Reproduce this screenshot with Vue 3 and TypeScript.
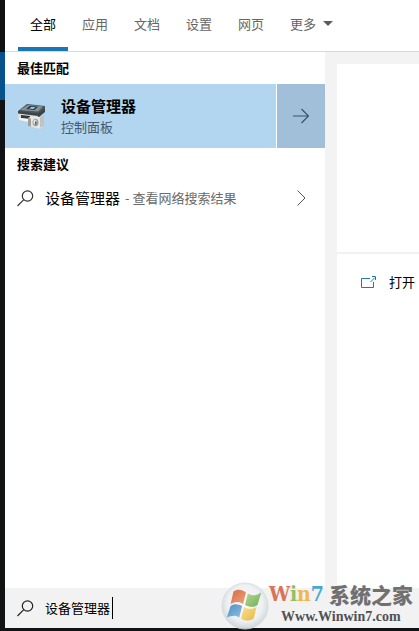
<script setup lang="ts">
import { ref } from 'vue'

const tabs: string[] = ['全部', '应用', '文档', '设置', '网页']
const active = ref(0)
const query = ref('设备管理器')
</script>

<template>
  <div class="desktop">
    <div class="search-window">
      <nav class="tabs" aria-label="搜索范围">
        <button
          v-for="(tab, i) in tabs"
          :key="tab"
          type="button"
          class="tab"
          :class="{ active: i === active }"
          @click="active = i"
        >{{ tab }}</button>
        <button type="button" class="tab more">
          更多
          <svg width="10" height="5" viewBox="0 0 10 5" aria-hidden="true"><path d="M0 0h10L5 5z" fill="#5c5c5c" /></svg>
        </button>
      </nav>

      <main class="body">
        <section class="results">
          <h2 class="heading">最佳匹配</h2>
          <div class="best">
            <button type="button" class="best-main">
              <svg class="device" width="30" height="26" viewBox="0 0 30 26" aria-hidden="true">
                <path d="M1 8 10 1l18 2v3.500l-6 5L1 9z" fill="#4d565b" />
                <path d="m3 7 8-5 15 1.500-5 5z" fill="#87939a" />
                <path d="m9 6 4-3.300 8 1-3.500 3.300z" fill="#2a3944" />
                <path d="m12 5.500 2.500-1.800 4 .5-2 1.800z" fill="#a7c5d7" />
                <path d="m1 8 20 2.500 7-5V9l-6 5L1 11z" fill="#3d4448" />
                <path d="m1 10.500 20 2.500v5L1 15.500z" fill="#dadddd" />
                <path d="m4 12 9 1v3l-9-1z" fill="#30383e" />
                <path d="m2 15 10 1v3l-10-2z" fill="#f7f5ef" />
                <path d="m11 15 4-2 10 1.500V25l-3 .5-11-2.500z" fill="#e8e7e2" />
                <path d="m11 15 3 .5v8l-3-.5z" fill="#9c9e99" />
                <path d="m23 14 4-2v10.500l-4 2.500z" fill="#c1c3c0" />
                <ellipse cx="18.500" cy="19.500" rx="3" ry="3.800" fill="#9a9e9f" />
                <ellipse cx="18" cy="19" rx="1.700" ry="2.500" fill="#dce5e9" />
                <path d="M18 18.500h1.500v3H18z" fill="#52616b" />
              </svg>
              <span class="best-text">
                <strong>设备管理器</strong>
                <span>控制面板</span>
              </span>
            </button>
            <button type="button" class="best-go" aria-label="展开">
              <svg width="16" height="16" viewBox="0 0 16 16" fill="none" stroke="#35536b" stroke-width="1.200" aria-hidden="true"><path d="M0 8h15.500M8.500 1l7 7-7 7" /></svg>
            </button>
          </div>

          <h2 class="heading">搜索建议</h2>
          <button type="button" class="suggestion">
            <svg class="lens" width="17" height="17" viewBox="0 0 17 17" fill="none" stroke="#333" stroke-width="1.200" aria-hidden="true"><circle cx="10.500" cy="6" r="5.200" /><path d="M6.800 9.700.5 16" /></svg>
            <span class="term">设备管理器</span>
            <span class="hint">- 查看网络搜索结果</span>
            <svg class="chevron" width="9" height="16" viewBox="0 0 9 16" fill="none" stroke="#555" aria-hidden="true"><path d="m.5.500 7.500 7.500-7.500 7.500" /></svg>
          </button>
        </section>

        <aside class="preview">
          <div class="preview-head"></div>
          <button type="button" class="open">
            <svg width="16" height="12" viewBox="0 0 16 12" fill="none" stroke="#2178b5" aria-hidden="true"><path d="M9 2.500H.5v9h12V6M9.500 6l4.500-4.500M11 .5h3.500V4" /></svg>
            <span>打开</span>
          </button>
        </aside>
      </main>

      <footer class="search-bar">
        <label class="lens-label" for="query">
          <svg class="lens" width="17" height="17" viewBox="0 0 17 17" fill="none" stroke="#222" stroke-width="1.200" aria-hidden="true"><circle cx="10.500" cy="6" r="5.200" /><path d="M6.800 9.700.5 16" /></svg>
        </label>
        <input id="query" v-model="query" type="text" aria-label="搜索" :style="{ width: query.length + 'em' }">
        <span class="caret"></span>
      </footer>
    </div>

    <div class="watermark">
      <svg width="48" height="48" viewBox="0 0 50 50" aria-hidden="true">
        <defs>
          <radialGradient id="orb" cx="50%" cy="45%" r="56%">
            <stop offset="0" stop-color="#fff" />
            <stop offset=".7" stop-color="#edf0f2" />
            <stop offset="1" stop-color="#c8d1d7" />
          </radialGradient>
          <linearGradient id="red" x2="1" y2="1"><stop stop-color="#d85e3c" /><stop offset="1" stop-color="#eaa06f" /></linearGradient>
          <linearGradient id="green" x2="1" y2="1"><stop stop-color="#b8d78a" /><stop offset="1" stop-color="#62a94e" /></linearGradient>
          <linearGradient id="blue" x2="1" y2="1"><stop stop-color="#4384be" /><stop offset="1" stop-color="#81bee1" /></linearGradient>
          <linearGradient id="yellow" x2="1" y2="1"><stop stop-color="#fae184" /><stop offset="1" stop-color="#e9b13c" /></linearGradient>
        </defs>
        <circle cx="25" cy="25" r="24" fill="url(#orb)" stroke="#d5dce0" />
        <path d="M13 10c4-3 9-2 13 1l-3 12c-4-3-8-3-13 0z" fill="url(#red)" />
        <path d="M28 12c5 3 9 2 14-1l-4 13c-4 3-9 2-13 0z" fill="url(#green)" />
        <path d="M10 25c4-3 8-2 12 0l-3 12c-4-3-8-2-13 0z" fill="url(#blue)" />
        <path d="M24 26c5 3 9 2 13 0l-3 12c-4 3-9 3-13 0z" fill="url(#yellow)" />
      </svg>
      <div class="brand">
        <div class="brand-name"><span class="latin"><b class="w">W</b><b class="i">i</b><b class="n">n</b><b class="seven">7</b></span><span class="cjk">系统之家</span></div>
        <div class="brand-url">Www.Winwin7.com</div>
      </div>
    </div>
  </div>
</template>

<style>
body {
  margin: 0;
}
</style>

<style scoped>
.desktop {
  position: relative;
  box-sizing: border-box;
  min-height: 100vh;
  display: flex;
  padding: 0 0 3px 5px;
  overflow: hidden;
  background: linear-gradient(#111 52px, #07528c 52px, #07528c 100px, #101214 100px);
  font-family: "Noto Sans CJK SC", sans-serif;
  font-size: 13px;
  line-height: 20px;
  color: #000;
}
button {
  margin: 0;
  padding: 0;
  border: 0;
  background: none;
  font: inherit;
  color: inherit;
  text-align: left;
  white-space: nowrap;
}
svg {
  display: block;
  flex: none;
}
.search-window {
  flex: 1;
  min-width: 0;
  display: flex;
  flex-direction: column;
  background: #fff;
}
.tabs {
  display: flex;
  gap: 2px;
  height: 51px;
  padding-left: 13px;
  border-bottom: 1px solid #d9d9d9;
}
.tab {
  box-sizing: border-box;
  padding: 0 12px;
  border-bottom: 4px solid transparent;
  color: #666;
}
.tab.active {
  color: #000;
  border-bottom-color: #1976b8;
}
.more {
  display: flex;
  align-items: center;
  gap: 7px;
}
.body {
  flex: 1;
  display: flex;
}
.results {
  flex: 0 1 320px;
}
.heading {
  margin: 0;
  padding: 6px 12px;
  font-size: 13px;
  font-weight: 700;
  line-height: 20px;
}
.best {
  display: flex;
  gap: 1px;
  height: 64px;
}
.best-main {
  flex: 1;
  display: flex;
  align-items: center;
  gap: 14px;
  padding-left: 12px;
  background: #b2d5f0;
}
.best-text {
  display: flex;
  flex-direction: column;
  color: #46586a;
}
.best-text strong {
  font-size: 15px;
  line-height: 22px;
  color: #000;
}
.best-go {
  width: 48px;
  display: flex;
  align-items: center;
  justify-content: center;
  background: #a1bfd9;
}
.suggestion {
  width: 100%;
  height: 36px;
  display: flex;
  align-items: center;
  padding: 0 19px 0 12px;
}
.term {
  margin-left: 11px;
  font-size: 15px;
}
.hint {
  margin-left: 5px;
  color: #6a6a6a;
}
.chevron {
  margin-left: auto;
}
.preview {
  flex: 1;
  border-left: 12px solid #f3f3f3;
  border-top: 12px solid #f3f3f3;
}
.preview-head {
  height: 188px;
  border-bottom: 2px solid #f1f1f1;
}
.open {
  display: flex;
  align-items: center;
  gap: 12px;
  height: 56px;
  padding-left: 24px;
}
.search-bar {
  height: 40px;
  display: flex;
  align-items: center;
  padding-left: 12px;
  background: #f2f2f2;
}
.search-bar input {
  margin: 0 0 0 11px;
  padding: 0;
  border: 0;
  outline: 0;
  background: none;
  font: inherit;
  color: #000;
}
.caret {
  width: 1px;
  height: 22px;
  margin-left: 2px;
  background: #000;
}
.watermark {
  position: absolute;
  right: 6px;
  bottom: 1px;
  display: flex;
  align-items: center;
  opacity: 0.92;
}
.brand-name {
  display: flex;
  align-items: center;
  gap: 5px;
  height: 22px;
}
.latin {
  font-family: "DejaVu Serif Condensed", "DejaVu Serif", serif;
  font-size: 21px;
}
.cjk {
  font-size: 21px;
  font-weight: 900;
  color: #666;
}
.w {
  color: #d7694c;
}
.i {
  color: #8dbb55;
}
.n {
  color: #eeb43c;
}
.seven {
  color: #3ba0d0;
}
.brand-url {
  padding-left: 12px;
  font-family: "Liberation Serif", serif;
  font-size: 14px;
  font-weight: 700;
  line-height: 24px;
  color: #444;
}
</style>
